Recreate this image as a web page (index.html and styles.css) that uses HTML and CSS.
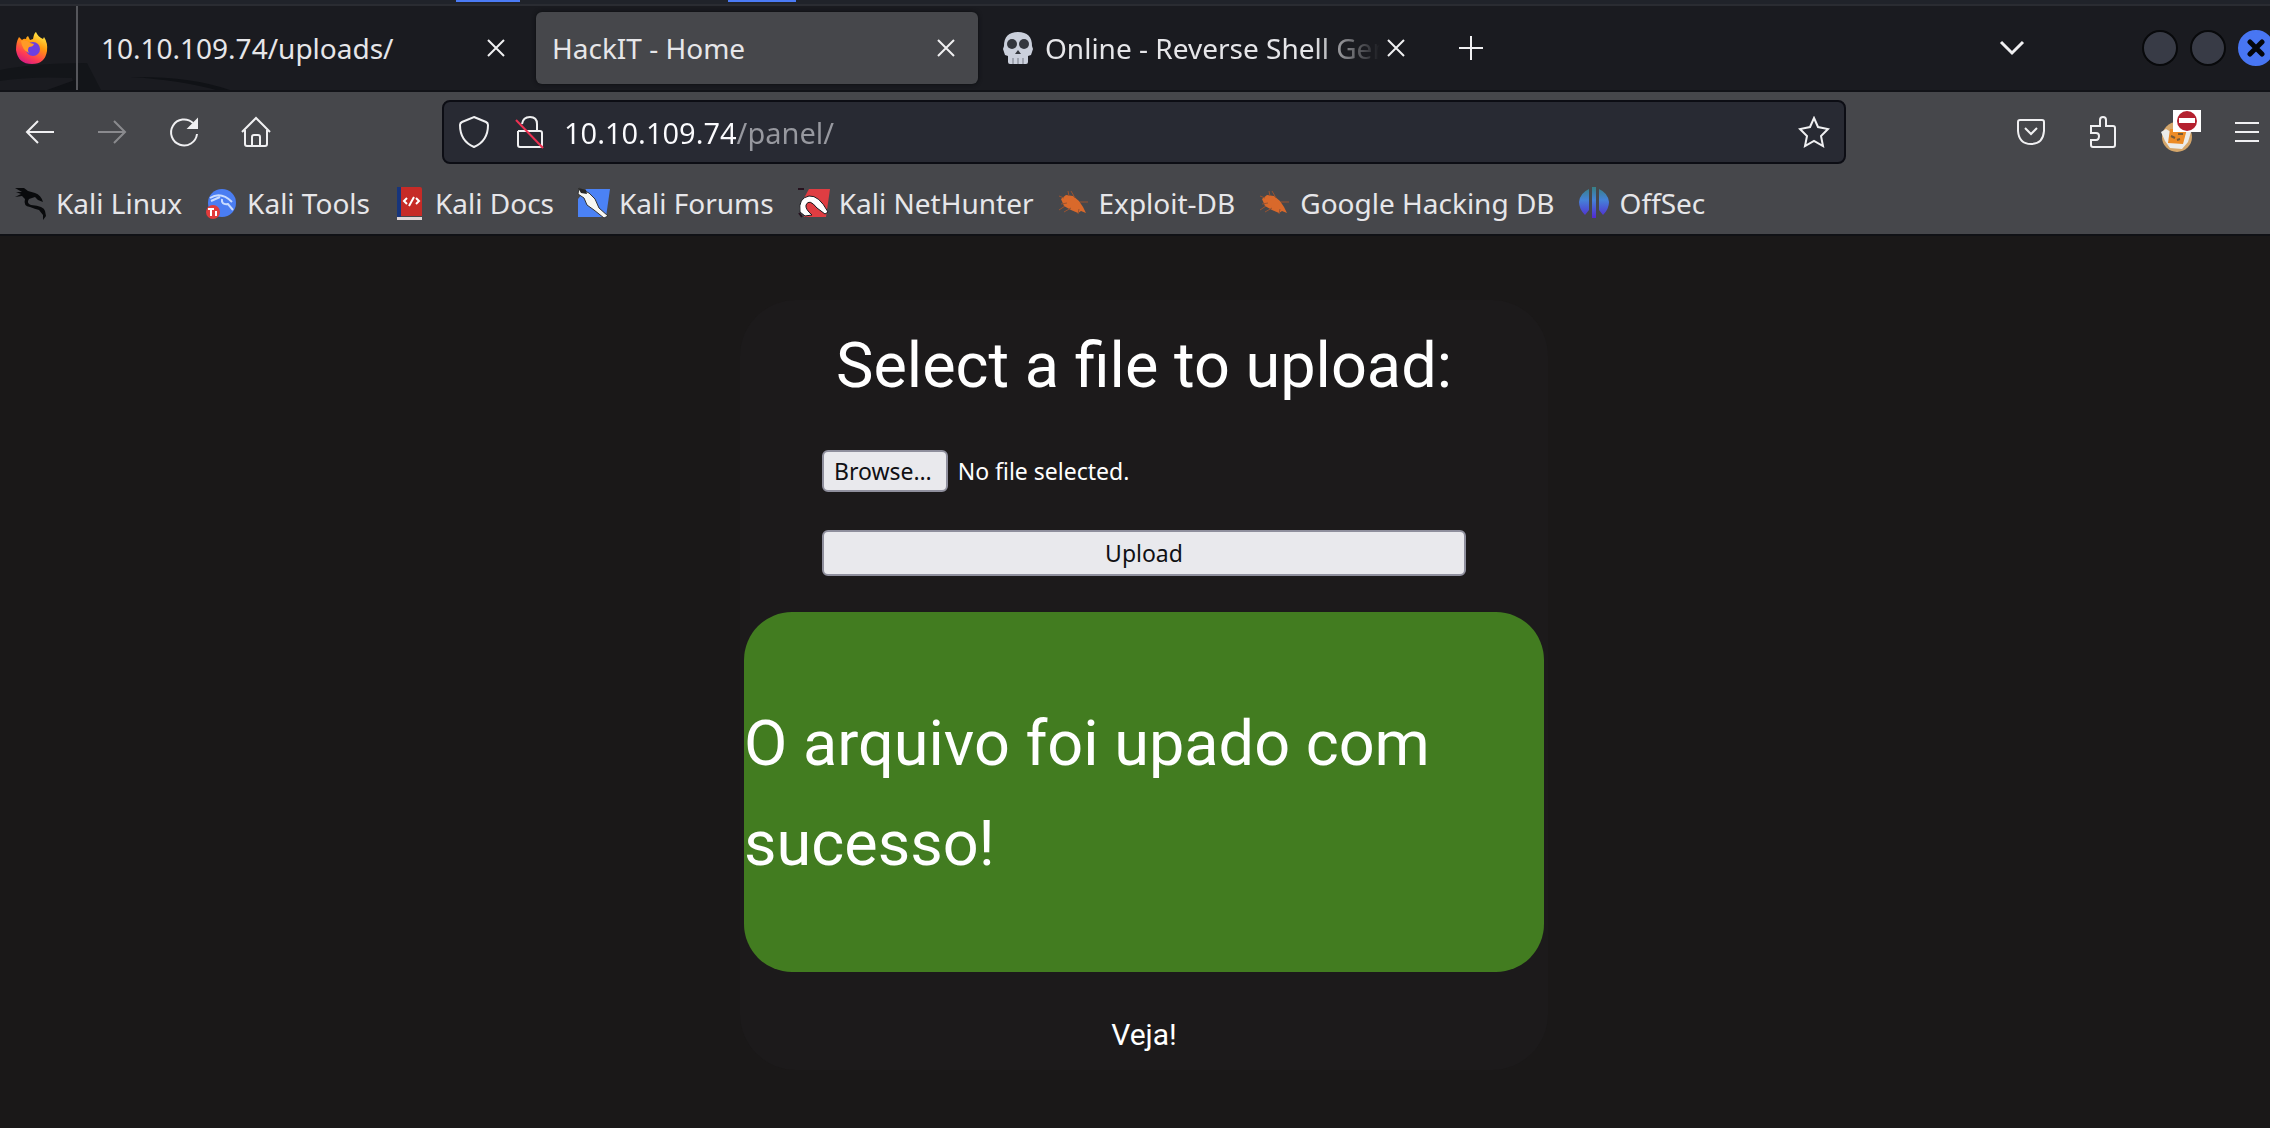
FILE: index.html
```html
<!DOCTYPE html>
<html lang="pt-BR">
<head>
<meta charset="utf-8">
<title>HackIT - Home</title>
<link rel="stylesheet" href="styles.css">
</head>
<body>
<header class="browser">
  <div class="desktop-strip"><span class="task task-one"></span><span class="task task-two"></span></div>
  <div class="tabbar">
    <svg class="wallpaper" width="240" height="86" viewBox="0 0 240 86" aria-hidden="true">
      <path d="M0 66Q35 59 87 59L101 86H76L72 74Q30 72 0 77Z" fill="#131519"/>
      <path d="M47 86L75 76L80 86Z" fill="#101216"/>
      <path d="M130 73Q190 72 230 86H216Q180 76 130 73Z" fill="#101216"/>
    </svg>
    <button class="pinned" aria-label="Firefox">
      <svg width="32" height="34" viewBox="0 0 32 34">
        <defs><linearGradient id="fox" x1=".8" y1="0" x2=".3" y2="1"><stop offset="0" stop-color="#fff44f"/><stop offset=".4" stop-color="#ff980e"/><stop offset=".75" stop-color="#ff3d52"/><stop offset="1" stop-color="#d51a86"/></linearGradient></defs>
        <path d="M3 6L6 9Q8 7 10 8Q10 6 12 5L14 9L17 8Q18 2 20 1Q22 6 27 8L28 6Q32 12 31 20Q29 33 16 33Q2 33 0 19Q0 11 3 6Z" fill="url(#fox)"/>
        <circle cx="17" cy="18" r="7" fill="#6d3fe0"/>
        <path d="M5 10Q10 8 14 12L18 13Q17 16 13 16Q11 19 13 22Q6 19 5 10Z" fill="#ff9a26"/>
      </svg>
    </button>
    <div class="tab tab-plain"><span class="tab-title">10.10.109.74/uploads/</span>
      <button class="tab-close" aria-label="Close tab"><svg width="18" height="18" viewBox="0 0 18 18"><path d="M1 1L17 17M17 1L1 17"/></svg></button></div>
    <div class="tab tab-active"><span class="tab-title">HackIT - Home</span>
      <button class="tab-close" aria-label="Close tab"><svg width="18" height="18" viewBox="0 0 18 18"><path d="M1 1L17 17M17 1L1 17"/></svg></button></div>
    <div class="tab tab-shell">
      <svg class="skull" width="30" height="32" viewBox="0 0 30 32"><path d="M15 0Q29 0 29 14L30 17L28 23L25 24V30Q25 32 23 32H7Q5 32 5 30V24L2 23L0 17L1 14Q1 0 15 0Z" fill="#cbd0dc"/><circle cx="9" cy="12" r="5" fill="#34373e"/><circle cx="21" cy="12" r="5" fill="#34373e"/><path d="M15 18L18 22H12Z" fill="#34373e"/><path d="M10 26V32M15 26V32M20 26V32" stroke="#777b85" stroke-width="1"/></svg>
      <span class="tab-title">Online - Reverse Shell Generator</span>
      <button class="tab-close" aria-label="Close tab"><svg width="18" height="18" viewBox="0 0 18 18"><path d="M1 1L17 17M17 1L1 17"/></svg></button></div>
    <button class="new-tab" aria-label="New tab"><svg width="26" height="26" viewBox="0 0 26 26"><path d="M13 1V25M1 13H25"/></svg></button>
    <button class="all-tabs" aria-label="List all tabs"><svg width="26" height="16" viewBox="0 0 26 16"><path d="M2 2L13 13L24 2"/></svg></button>
    <div class="window-buttons">
      <button class="dot" aria-label="Minimize"></button>
      <button class="dot" aria-label="Maximize"></button>
      <button class="dot dot-close" aria-label="Close window"><svg width="18" height="18" viewBox="0 0 18 18"><path d="M3 3L15 15M15 3L3 15"/></svg></button>
    </div>
  </div>
  <nav class="toolbar" aria-label="Navigation">
    <div class="nav-buttons">
      <button aria-label="Back"><svg width="32" height="32" viewBox="0 0 32 32"><path d="M14 5L3 16L14 27M3 16H30"/></svg></button>
      <button class="disabled" aria-label="Forward" disabled><svg width="32" height="32" viewBox="0 0 32 32"><path d="M18 5L29 16L18 27M29 16H2"/></svg></button>
      <button aria-label="Reload"><svg width="32" height="32" viewBox="0 0 32 32"><path d="M25 7A13 13 0 1 0 29 18"/><path class="solid" d="M29 4V12H21Z"/></svg></button>
      <button aria-label="Home"><svg width="32" height="32" viewBox="0 0 32 32"><path d="M2 16L16 2L30 16M5 14V28Q5 30 7 30H25Q27 30 27 28V14M12 30V21Q12 19 14 19H18Q20 19 20 21V30"/></svg></button>
    </div>
    <div class="urlbar">
      <button aria-label="Tracking protection"><svg width="32" height="34" viewBox="0 0 32 34"><path d="M16 2L28 7Q30 8 30 10Q30 26 16 32Q2 26 2 10Q2 8 4 7Z"/></svg></button>
      <button aria-label="Connection not secure"><svg width="30" height="34" viewBox="0 0 30 34"><path d="M4 16H26Q28 16 28 18V30Q28 32 26 32H6Q4 32 4 30V16M8 9Q9 2 16 2Q23 2 23 9V16"/><path class="slash" d="M2 5L29 33"/></svg></button>
      <input class="address" type="text" aria-label="Address" value="10.10.109.74/panel/">
      <button aria-label="Bookmark this page"><svg width="32" height="32" viewBox="0 0 32 32"><path d="M16 2L20 11L30 13L23 20L25 30L16 25L7 30L9 20L2 13L12 11Z"/></svg></button>
    </div>
    <div class="tools">
      <button aria-label="Pocket"><svg width="30" height="28" viewBox="0 0 30 28"><path d="M4 2H26Q28 2 28 4V13Q27 26 15 26Q3 26 2 13V4Q2 2 4 2ZM9 10L15 16L21 10"/></svg></button>
      <button aria-label="Extensions"><svg width="30" height="34" viewBox="0 0 30 34"><path d="M3 11H12V5Q12 2 15 2Q18 2 18 5V11H25Q27 11 27 13V30Q27 32 25 32H5Q3 32 3 30V25H8Q11 25 11 21Q11 18 8 18H3Z"/></svg></button>
      <button class="proxy" aria-label="FoxyProxy"><svg width="42" height="44" viewBox="0 0 42 44"><circle cx="17" cy="27" r="15" fill="#d5a66a" stroke="none"/><path d="M1 22L6 19L11 22L26 18L31 22L28 32L22 39L10 38L5 31Z" fill="#ececea" stroke="none"/><path d="M10 19H27L23 34L8 33Z" fill="#ed8b25" stroke="none"/><path d="M11 26L15 28M18 24H23M17 30L20 29" stroke="#765a38" stroke-width="2"/><rect x="13" y="0" width="28" height="22" fill="#fff" stroke="none"/><circle cx="27" cy="11" r="10" fill="#b4202e" stroke="none"/><rect x="19" y="8" width="16" height="5" fill="#fff" stroke="none"/></svg></button>
      <button aria-label="Menu"><svg width="26" height="22" viewBox="0 0 26 22"><path d="M1 2H25M1 11H25M1 20H25"/></svg></button>
    </div>
  </nav>
  <nav class="bookmarks" aria-label="Bookmarks">
    <a href="#"><svg width="34" height="34" viewBox="0 0 34 34"><path d="M1 2L10 2L14 5L21 7Q27 9 29 16L24 14L21 11L15 13Q12 17 17 19Q30 20 31 25L32 30L29 34L29 29L25 24Q21 23 16 21Q9 20 11 13L8 10L1 11L7 8L2 6L8 6Z" fill="#090a0c"/></svg>Kali Linux</a>
    <a href="#"><svg width="34" height="34" viewBox="0 0 34 34"><circle cx="17" cy="17" r="14" fill="#4a7df2"/><path d="M5 12Q16 5 27 16M17 13Q16 19 23 18L28 24M6 15L15 11" stroke="#c9dcff" stroke-width="2" fill="none"/><circle cx="8" cy="26" r="7" fill="#e13b3b"/><path d="M3 23H9M6 23V30M11 25V30" stroke="#fff" stroke-width="2"/></svg>Kali Tools</a>
    <a href="#"><svg width="34" height="34" viewBox="0 0 34 34"><path d="M4 1H8V32H4Z" fill="#17357c"/><path d="M8 1H27Q29 1 29 3V30H8Z" fill="#c62b27"/><path d="M4 31H29V34H4Z" fill="#dfd6d6"/><path d="M14 12L11 15L14 18M23 12L26 15L23 18M21 11L16 20" stroke="#fff" stroke-width="2" fill="none"/></svg>Kali Docs</a>
    <a href="#"><svg width="34" height="34" viewBox="0 0 34 34"><path d="M9 3H33L29 31H1V13Z" fill="#4b82f5"/><path d="M2 2L12 7L18 13L22 22L31 30L27 32L17 24L10 19L7 12L1 8Z" fill="#f7f7f3" stroke="#333" stroke-width="1"/><path d="M1 2L9 4L10 8L4 7Z" fill="#272727"/></svg>Kali Forums</a>
    <a href="#"><svg width="34" height="34" viewBox="0 0 34 34"><path d="M12 3H33L29 31H7V12Z" fill="#df3d42"/><path d="M3 26Q1 12 12 10Q22 9 31 26L28 28L20 22Q12 12 9 19Q8 23 15 29L8 30Z" fill="#fff" stroke="#191a1f" stroke-width="1"/><path d="M1 3L7 3M2 27L5 31" stroke="#25121e" stroke-width="2"/></svg>Kali NetHunter</a>
    <a href="#"><svg width="34" height="34" viewBox="0 0 34 34"><path d="M4 13L9 9L16 10L22 15L26 21L29 27L24 25L21 27L14 24L7 20Z" fill="#d9692b"/><path d="M7 12L2 10M12 10L11 5M18 12L14 5M23 16H31M8 20L2 24M14 22L7 26M22 23L21 28M10 17L4 18" stroke="#985331" stroke-width="1"/></svg>Exploit-DB</a>
    <a href="#"><svg width="34" height="34" viewBox="0 0 34 34"><path d="M4 13L9 9L16 10L22 15L26 21L29 27L24 25L21 27L14 24L7 20Z" fill="#d9692b"/><path d="M7 12L2 10M12 10L11 5M18 12L14 5M23 16H31M8 20L2 24M14 22L7 26M22 23L21 28M10 17L4 18" stroke="#985331" stroke-width="1"/></svg>Google Hacking DB</a>
    <a href="#"><svg width="34" height="34" viewBox="0 0 34 34"><defs><linearGradient id="off" gradientUnits="userSpaceOnUse" x1="0" y1="2" x2="0" y2="32"><stop offset="0" stop-color="#38808a"/><stop offset=".4" stop-color="#4582d8"/><stop offset="1" stop-color="#5228d0"/></linearGradient></defs><path d="M14 1H18V32H14ZM11 3V24L7 29Q1 23 1 16Q2 7 11 3ZM21 3V24L25 29Q31 23 31 16Q30 7 21 3Z" fill="url(#off)"/></svg>OffSec</a>
  </nav>
</header>
<main class="page">
  <section class="card">
    <form class="upload-form">
      <h1>Select a file to upload:</h1>
      <div class="file-field">
        <input class="file-input" type="file" id="file">
        <label class="form-button browse" for="file">Browse…</label>
        <span>No file selected.</span>
      </div>
      <button class="form-button submit" type="submit">Upload</button>
    </form>
    <p class="success">O arquivo foi upado com sucesso!</p>
    <a class="view" href="#">Veja!</a>
  </section>
</main>
</body>
</html>
```
FILE: styles.css
```css
* { box-sizing: border-box; }
body {
  margin: 0;
  min-height: 100vh;
  background: #1a1818;
  color: #fff;
  font-family: "Noto Sans", sans-serif;
  overflow-x: hidden;
}
button { font: inherit; color: inherit; border: 0; padding: 0; background: none; }
a { color: inherit; text-decoration: none; }
svg { display: block; flex: none; }
.browser { font-size: 28px; line-height: 40px; color: #e6e6e9; }
.browser button { display: flex; align-items: center; justify-content: center; flex: none; }
.browser button svg { fill: none; stroke: #f0f0f2; stroke-width: 2; }

.desktop-strip { display: flex; height: 6px; background: #20232a; border-bottom: 2px solid #2a2c32; }
.task { height: 2px; background: #4b7bf5; }
.task-one { width: 64px; margin-left: 456px; }
.task-two { width: 68px; margin-left: 208px; }

.tabbar { position: relative; display: flex; align-items: center; height: 86px; background: #1a1b20; border-bottom: 2px solid #121318; }
.wallpaper { position: absolute; left: 0; bottom: 0; }
.tabbar .pinned { position: relative; width: 78px; height: 84px; padding-right: 12px; border-right: 2px solid #55565b; }
.browser .pinned svg { stroke: none; }
.tab { position: relative; display: flex; align-items: center; height: 72px; width: 442px; padding: 0 16px; border-radius: 6px; }
.tab-plain { width: 458px; padding: 0 24px 0 23px; }
.tab-active { background: #46474b; box-shadow: 0 0 4px #0c0d10; }
.tab-shell { width: 444px; padding: 0 10px 0 25px; gap: 12px; }
.tab-title { flex: 1; overflow: hidden; white-space: nowrap; }
.tab-shell .tab-title { mask-image: linear-gradient(to right, #000 80%, transparent); }
.tab-close { width: 32px; height: 32px; }
.tab-shell .tab-close { margin-left: -12px; }
.new-tab { width: 72px; height: 72px; margin-left: 13px; }
.all-tabs { width: 48px; height: 48px; margin-left: auto; }
.browser .all-tabs svg { stroke-width: 3; }
.window-buttons { display: flex; gap: 12px; margin: 0 -4px 0 106px; }
.window-buttons .dot { width: 36px; height: 36px; border-radius: 50%; background: #383b46; border: 2px solid #08090b; }
.window-buttons .dot-close { background: #4876f3; border-color: #4876f3; }
.browser .dot-close svg { stroke: #05070c; stroke-width: 5; stroke-linecap: round; }

.toolbar { display: flex; align-items: center; height: 80px; background: #46474b; }
.nav-buttons { display: flex; gap: 40px; padding-left: 24px; width: 442px; }
.nav-buttons .disabled { opacity: 0.4; }
.browser button .solid { fill: #f0f0f2; }
.browser button .slash { stroke: #ee3152; }
.urlbar { display: flex; flex: 1; align-items: center; min-width: 0; height: 64px; padding: 0 14px; background: #282a33; border: 2px solid #0c0d14; border-radius: 8px; }
.urlbar button + button { margin-left: 24px; }
.address {
  flex: 1;
  min-width: 0;
  height: 48px;
  margin-left: 20px;
  padding: 0;
  border: 0;
  outline: 0;
  font: inherit;
  font-size: 29px;
  color: transparent;
  background: linear-gradient(to right, #fbfbfe 173px, #97989f 173px) text;
}
.tools { display: flex; align-items: center; width: 424px; padding-right: 10px; gap: 42px; justify-content: flex-end; }
.tools .proxy { margin-right: -10px; }

.bookmarks { display: flex; align-items: center; gap: 23px; height: 64px; padding: 0 14px; background: #46474b; border-bottom: 2px solid #101115; white-space: nowrap; }
.bookmarks a { display: flex; align-items: center; gap: 8px; }

.page { display: flex; justify-content: center; padding: 64px 0 56px 18px; }
.card { display: flex; flex-direction: column; align-items: center; width: 808px; padding: 16px 4px; border-radius: 56px; background: #1c1a1b; font-family: Roboto, sans-serif; }
.upload-form { display: flex; flex-direction: column; width: 644px; }
h1 { margin: 0 0 34px; font-size: 63px; line-height: 100px; font-weight: 400; text-align: center; white-space: nowrap; }
.file-field { position: relative; display: flex; align-items: center; gap: 10px; margin-bottom: 38px; font: 23px/38px "Noto Sans", sans-serif; }
.file-input { position: absolute; inset: 0; width: 100%; opacity: 0; }
.form-button { padding: 0 10px; border: 2px solid #8f8f9d; border-radius: 6px; background: #e9e9ed; color: #101014; }
.browse { padding-right: 14px; }
.submit { font: 23px/42px "Noto Sans", sans-serif; }
.success { width: 100%; margin: 36px 0 44px; padding: 82px 0 78px; border-radius: 48px; background: #427c20; font-size: 63px; line-height: 100px; font-weight: 400; }
.view { font-size: 30px; line-height: 38px; }
```
